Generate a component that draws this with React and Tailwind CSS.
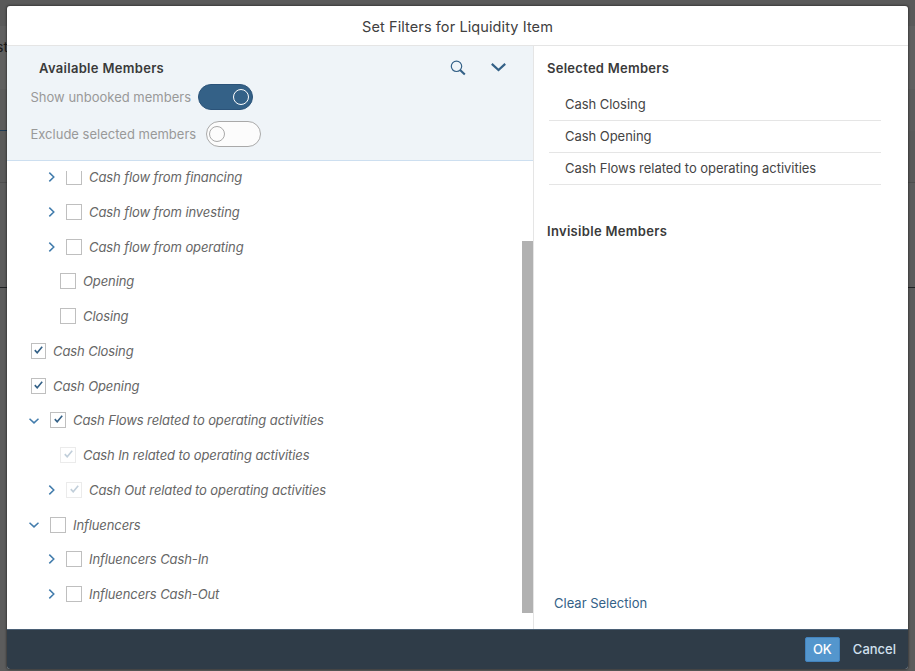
import React from "react";

const rows = [
  { label: "Cash flow from financing", kind: "child", arrow: "right", clipped: true },
  { label: "Cash flow from investing", kind: "child", arrow: "right" },
  { label: "Cash flow from operating", kind: "child", arrow: "right" },
  { label: "Opening", kind: "leaf" },
  { label: "Closing", kind: "leaf" },
  { label: "Cash Closing", kind: "rootLeaf", checked: true },
  { label: "Cash Opening", kind: "rootLeaf", checked: true },
  { label: "Cash Flows related to operating activities", kind: "root", arrow: "down", checked: true },
  { label: "Cash In related to operating activities", kind: "leaf", checked: true, disabled: true },
  { label: "Cash Out related to operating activities", kind: "child", arrow: "right", checked: true, disabled: true },
  { label: "Influencers", kind: "root", arrow: "down" },
  { label: "Influencers Cash-In", kind: "child", arrow: "right" },
  { label: "Influencers Cash-Out", kind: "child", arrow: "right" },
];

const selected = ["Cash Closing", "Cash Opening", "Cash Flows related to operating activities"];

const indents = {
  child: "pl-[41px]",
  leaf: "pl-[53px]",
  rootLeaf: "pl-6",
  root: "pl-[22px]",
};

function Arrow({ direction }) {
  if (direction === "right") {
    return (
      <svg className="mr-[10px] h-[10px] w-2 shrink-0" viewBox="0 0 8 10" fill="none" stroke="#427cac" strokeWidth="1.5">
        <path d="M1.3 .6 L5.8 5 L1.3 9.4" />
      </svg>
    );
  }
  return (
    <svg className="mr-[11px] mt-px h-[6px] w-[10px] shrink-0" viewBox="0 0 10 6" fill="none" stroke="#427cac" strokeWidth="1.5">
      <path d="M.5 .7 L5 4.9 L9.5 .7" />
    </svg>
  );
}

function Box({ checked, disabled, narrow, clipped }) {
  return (
    <span
      className={`flex shrink-0 justify-center border border-[#bfbfbf] bg-white ${clipped ? "mt-[2px] h-[14px] border-t-0" : "h-4"} ${narrow ? "w-[15px]" : "w-4"} ${disabled ? "opacity-30" : ""}`}
    >
      {checked && (
        <svg className="mt-[2px] h-2 w-[9px]" viewBox="0 0 9 8" fill="none" stroke="#346187" strokeWidth="1.6">
          <path d="M.8 4.1 L3.2 6.8 L8.2 .7" />
        </svg>
      )}
    </span>
  );
}

function Row({ row }) {
  return (
    <div className={`flex h-[34.75px] items-center ${indents[row.kind]}`}>
      {row.arrow && <Arrow direction={row.arrow} />}
      <Box checked={row.checked} disabled={row.disabled} narrow={row.kind === "rootLeaf"} clipped={row.clipped} />
      <span className="ml-[7px] whitespace-nowrap italic tracking-[-0.1px] text-[#666]">{row.label}</span>
    </div>
  );
}

function Switch({ on }) {
  return on ? (
    <span className="flex h-[26px] w-[55px] items-center justify-end rounded-full border border-[#2b5379] bg-[#346187] pr-[3px]">
      <span className="h-4 w-4 rounded-full border border-white" />
    </span>
  ) : (
    <span className="flex h-[26px] w-[55px] items-center rounded-full border border-[#a9a9a9] bg-[#fcfcfc] pl-[2px]">
      <span className="h-4 w-4 rounded-full border border-[#a9a9a9]" />
    </span>
  );
}

function Backdrop() {
  return (
    <div className="absolute inset-0 overflow-hidden bg-[#5c5c5c]">
      <div className="h-[26px] bg-[#5a5a5a]" />
      <div className="flex h-[63px] items-start bg-[#606060]">
        <span className="-ml-[4px] mt-[11px] text-[14px] leading-5 text-[#1a1a1a]">st</span>
      </div>
      <div className="h-[41px]" />
      <div className="h-px w-[7px] bg-[#1c3a55]" />
      <div className="h-[51px] bg-[#5a5a5a]" />
      <div className="h-px bg-[#4e4e4e]" />
      <div className="h-[104px]" />
      <div className="h-px bg-[#202224]" />
    </div>
  );
}

export default function App() {
  return (
    <div className="relative h-[671px] w-[915px] overflow-hidden px-[7px] pt-[6px] font-['Inter','Noto_Sans',sans-serif] text-[13px] leading-5">
      <Backdrop />
      <section className="relative flex h-[663px] w-[901px] flex-col overflow-hidden rounded-[3px] bg-white shadow-[0_0_2px_1px_rgba(0,0,0,0.35)]">
        <header className="flex h-10 shrink-0 items-center justify-center border-b border-[#e5e5e5] pt-[2px] text-[14.5px] tracking-[0.1px] text-[#404040]">
          Set Filters for Liquidity Item
        </header>
        <div className="flex h-[583px] shrink-0">
          <div className="flex w-[527px] shrink-0 flex-col border-r border-[#e5e5e5]">
            <div className="h-[115px] shrink-0 border-b border-[#cddff0] bg-[#eff4f8] pl-[23px]">
              <div className="flex h-[38px] items-center pl-[9px] pt-[6px]">
                <h2 className="w-[411px] font-semibold tracking-[0.31px] text-[#3a3a3a]">Available Members</h2>
                <svg className="h-4 w-4" viewBox="0 0 16 16" fill="none" stroke="#346187">
                  <circle cx="6.5" cy="6.3" r="5.2" strokeWidth="1.2" />
                  <path d="M10.1 9.9 L14.8 14.6" strokeWidth="2.1" />
                </svg>
                <svg className="mb-[2px] ml-[25px] h-[9px] w-[15px]" viewBox="0 0 15 9" fill="none" stroke="#346187" strokeWidth="2.2">
                  <path d="M.8 .9 L7.5 7 L14.2 .9" />
                </svg>
              </div>
              <div className="flex h-[26px] items-center text-[#999]">
                <span className="w-[168px] whitespace-nowrap pl-[0.5px]">Show unbooked members</span>
                <Switch on />
              </div>
              <div className="mt-[11px] flex h-[26px] items-center text-[#999]">
                <span className="w-[176px] whitespace-nowrap pl-[0.5px]">Exclude selected members</span>
                <Switch />
              </div>
            </div>
            <div className="mt-[10px] flex h-[442px]">
              <div className="-mt-[11.375px] w-[515px]">
                {rows.map((row) => (
                  <Row key={row.label} row={row} />
                ))}
              </div>
              <div className="mt-[70px] h-[372px] w-[11px] bg-[#b1b1b1]" />
            </div>
          </div>
          <div className="flex flex-1 flex-col text-[#3a3a3a]">
            <h2 className="ml-[13px] mt-[12px] font-semibold tracking-[0.27px]">Selected Members</h2>
            <ul className="ml-[15px] mt-[11px] w-[332px]">
              {selected.map((name) => (
                <li key={name} className="flex h-8 items-center border-b border-[#e5e5e5] pb-px pl-4 tracking-[-0.04px] text-[#444]">
                  {name}
                </li>
              ))}
            </ul>
            <h2 className="ml-[13px] mt-9 font-semibold tracking-[0.31px]">Invisible Members</h2>
            <button className="mb-[16px] ml-5 mt-auto self-start text-[#346187]">Clear Selection</button>
          </div>
        </div>
        <footer className="flex h-10 shrink-0 items-center justify-end border-t border-[#4b6075] bg-[#2f3c48] pr-3">
          <button className="h-[25px] w-[35px] rounded-[2px] border border-[#4283be] bg-[#5496cd] font-medium leading-[23px] text-white">OK</button>
          <button className="ml-[13px] pb-px font-medium text-[#d1e0ee]">Cancel</button>
        </footer>
      </section>
    </div>
  );
}
